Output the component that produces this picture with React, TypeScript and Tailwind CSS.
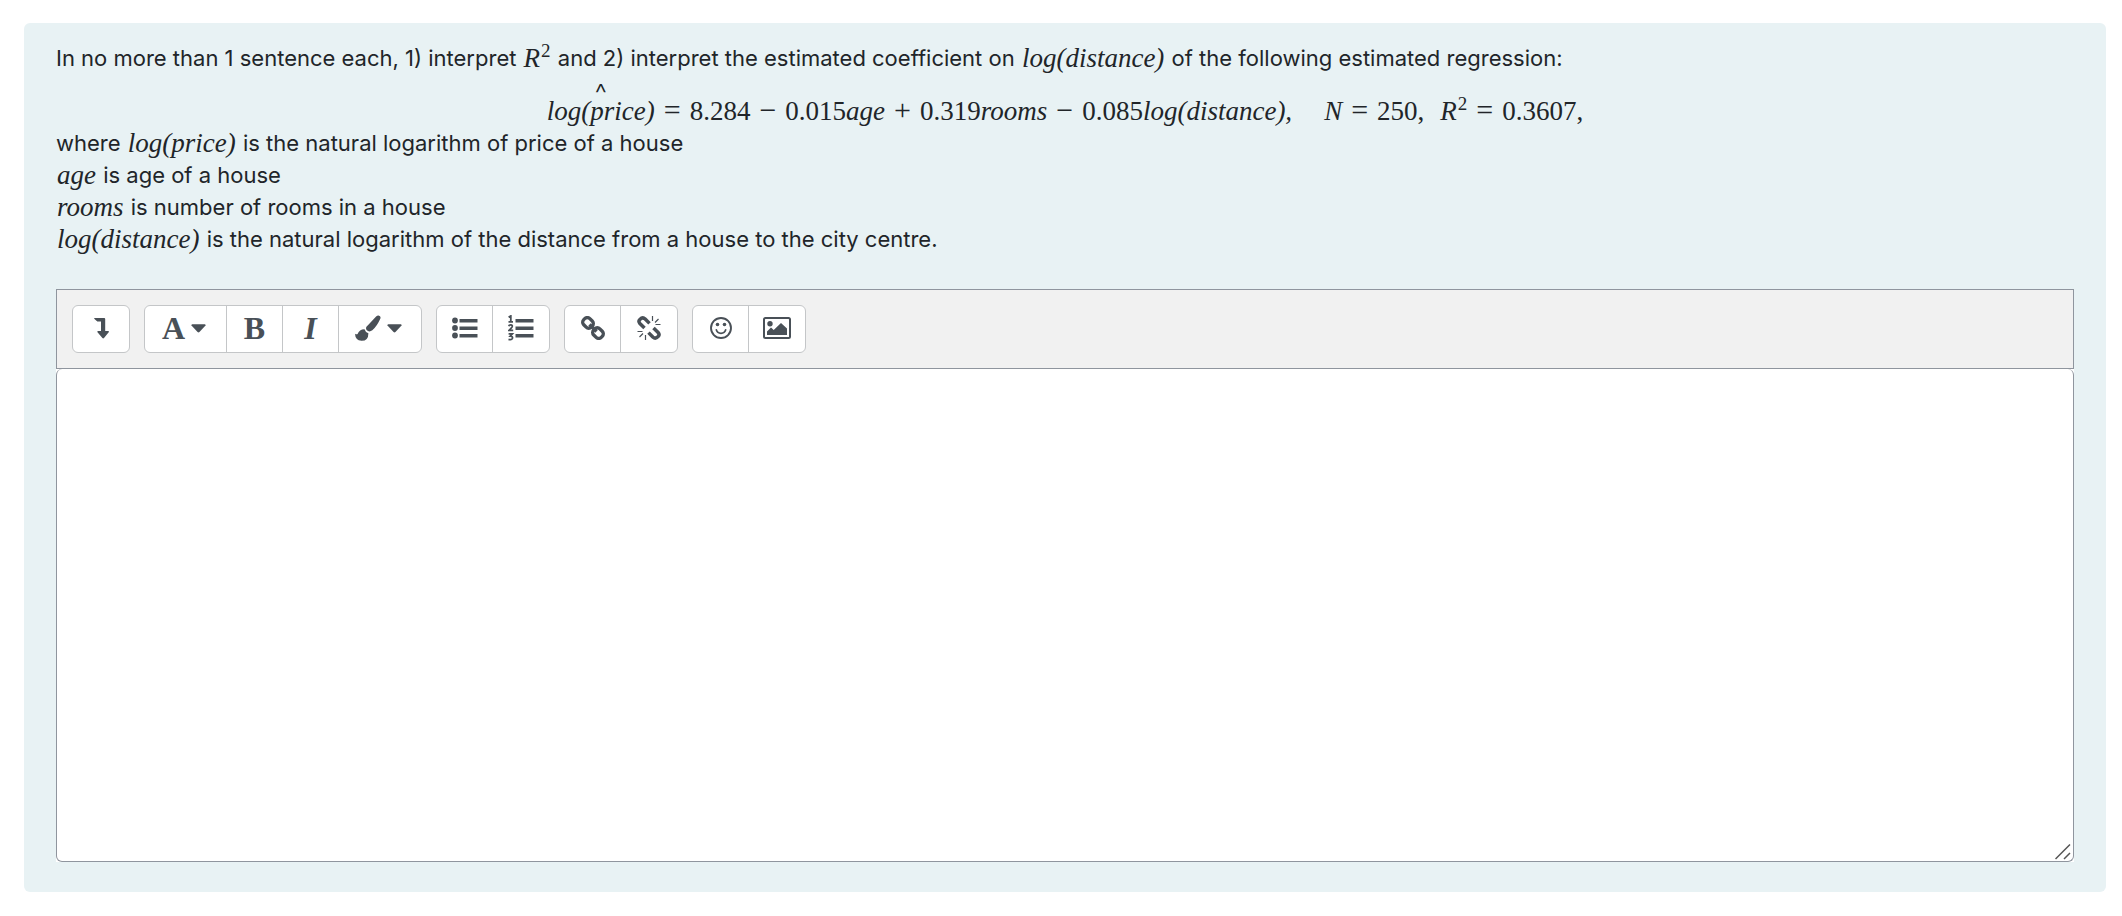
import type { ReactNode } from "react";

function Eq({ children }: { children: ReactNode }) {
  return (
    <span className="relative top-px mx-px font-['Liberation_Serif',serif] text-[27px] leading-none italic">{children}</span>
  );
}

function Num({ children }: { children: ReactNode }) {
  return <span className="not-italic">{children}</span>;
}

function Op({ children }: { children: ReactNode }) {
  return <span className="mx-[9px] text-[30px] leading-none not-italic">{children}</span>;
}

const Sup = () => <sup className="-top-[10px] ml-px text-[19px] leading-none not-italic">2</sup>;

const icon = "fill-[#495057]";

function Caret() {
  return (
    <svg width="15" height="9" viewBox="0 0 16 9" className={icon} aria-hidden="true">
      <path d="M1.3 0h13.4q1.2.2.8 1.3L9 8.2q-1 1-2 0L.5 1.3Q.1.2 1.3 0z" />
    </svg>
  );
}

const groups: { label: string; w: string; body: ReactNode }[][] = [
  [
    {
      label: "Show more buttons",
      w: "w-14",
      body: (
        <svg width="15" height="22" viewBox="0 0 15 22" className={icon}>
          <path d="M.6 1h9.6q1 0 1 1v12h3q1.2.3.5 1.3L10 21q-.8.8-1.6 0L3.500 15.300Q3 14.300 4 14h3V4.500H3.300L.2 1.800Q0 1.200.6 1z" />
        </svg>
      ),
    },
  ],
  [
    { label: "Paragraph styles", w: "w-[82px] pr-[3px]", body: <><b className="text-[32px]">A</b><Caret /></> },
    { label: "Bold", w: "w-14", body: <b className="text-[32px]">B</b> },
    { label: "Italic", w: "w-14", body: <i className="text-[32px] font-bold">I</i> },
    {
      label: "Font colour",
      w: "w-[82px] pr-[3px]",
      body: (
        <>
          <svg width="26" height="26" viewBox="0 0 26 26" className={icon}>
            <path d="M23.500.4q2.800.6 1.800 3.400-3.300 7.500-8 11.500-2.300 1.800-4.300.8-2.700-1.500-1.700-4 .4-.9 1.600-1.900l8.200-8.600Q22.200.3 23.500.4zM9.500 14.300q.8 2.900 3.900 3.900 0 7.800-7 7.600Q.3 25.200 0 18.700q1.500 1 2.600.3 1.800-4.800 6.900-4.700z" />
          </svg>
          <Caret />
        </>
      ),
    },
  ],
  [
    {
      label: "Unordered list",
      w: "w-14",
      body: (
        <svg width="26" height="22" viewBox="0 0 26 22" className={icon}>
          <circle cx="3" cy="3.500" r="2.900" />
          <circle cx="3" cy="11" r="2.900" />
          <circle cx="3" cy="18.500" r="2.900" />
          <path d="M7.500 2h18v3.600h-18zM7.500 9.400h18V13h-18zM7.500 16.900h18v3.600h-18z" />
        </svg>
      ),
    },
    {
      label: "Ordered list",
      w: "w-14",
      body: (
        <svg width="26" height="26" viewBox="0 0 26 26" className={icon}>
          <path d="M7.500 4h18v3.600h-18zM7.500 11.400h18V15h-18zM7.500 18.900h18v3.600h-18z" />
          <g fill="none" stroke="#495057" strokeWidth="1.800">
            <path d="M.6 2.200 2.800.9v5.700M.5 6.900H5M.8 11.200q.5-1.500 2-1.400 2 .3 1.300 2-.5 1-3 3.500h4.100M.6 18.900h3.700l-2 2.200q2.400 0 2.200 2-.5 2.200-4 1.200" />
          </g>
        </svg>
      ),
    },
  ],
  [
    {
      label: "Link",
      w: "w-14",
      body: (
        <svg width="24" height="24" viewBox="0 0 24 24" fill="none" stroke="#495057" strokeWidth="3.400">
          <rect x="1.700" y="2.600" width="10.600" height="8.600" rx="3.600" transform="rotate(45 7 6.900)" />
          <rect x="11.700" y="12.800" width="10.600" height="8.600" rx="3.600" transform="rotate(45 17 17.100)" />
          <path d="m8.500 8.500 7 7" />
        </svg>
      ),
    },
    {
      label: "Unlink",
      w: "w-14",
      body: (
        <svg width="24" height="24" viewBox="0 0 24 24" fill="none" stroke="#495057">
          <path strokeWidth="3.500" d="M7.500 12 2.900 7.500Q1 5.300 2.900 3.400 5.600.6 8.200 3l4.300 4.400M16.500 12l4.600 4.500q1.900 2.200 0 4.100-2.700 2.800-5.300.4l-4.300-4.400" />
          <path strokeWidth="1.200" d="M15.500 0v5M18 6.500 21.500 3M18.500 8.500h5M8.500 24v-5M6 17.500 2.500 21M5.500 15.500h-5" />
        </svg>
      ),
    },
  ],
  [
    {
      label: "Emoji picker",
      w: "w-14",
      body: (
        <svg width="22" height="22" viewBox="0 0 22 22" className={icon}>
          <circle cx="11" cy="11" r="10" fill="none" stroke="#495057" strokeWidth="1.900" />
          <circle cx="7.500" cy="7.500" r="1.800" />
          <circle cx="14.500" cy="7.500" r="1.800" />
          <path d="M6.300 12.800Q7.300 16.300 11 16.300t4.700-3.500" fill="none" stroke="#495057" strokeWidth="1.700" strokeLinecap="round" />
        </svg>
      ),
    },
    {
      label: "Insert or edit image",
      w: "w-14",
      body: (
        <svg width="28" height="22" viewBox="0 0 28 22" className={icon}>
          <rect x="1" y="1" width="26" height="20" rx="1.500" fill="none" stroke="#495057" strokeWidth="2" />
          <circle cx="7" cy="6.800" r="2.700" />
          <path d="M4 18v-3.500l4-4 2.700 2.500L18 6l6 5.500V18z" />
        </svg>
      ),
    },
  ],
];

export default function App() {
  return (
    <main className="px-4 pt-[23px] pb-6 pl-6 font-[Inter,sans-serif] text-[#212529]">
      <section className="rounded-md bg-[#e8f2f4] px-8 pt-[19px] pb-[30px]">
        <div className="text-[22px] leading-8">
          <p className="h-8">
            In no more than 1 sentence each, 1) interpret <Eq>R<Sup /></Eq> and 2) interpret the estimated coefficient on{" "}
            <Eq>log(distance)</Eq> of the following estimated regression:
          </p>
          <p className="mt-5 h-8 text-center">
            <Eq>
              <span className="relative">
                log(price)
                {/* accent sits over the whole term */}
                <span className="absolute inset-x-0 bottom-full -mb-1 text-center font-[Inter,sans-serif] text-[27px] leading-3 font-light not-italic">^</span>
              </span>
              <Op>=</Op><Num>8.284</Num><Op>−</Op><Num>0.015</Num>age<Op>+</Op><Num>0.319</Num>rooms<Op>−</Op><Num>0.085</Num>log(distance),
              <span className="ml-8">N</span><Op>=</Op><Num>250,</Num>
              <span className="ml-4">R<Sup /></span><Op>=</Op><Num>0.3607,</Num>
            </Eq>
          </p>
          <p className="mt-px h-8">where <Eq>log(price)</Eq> is the natural logarithm of price of a house</p>
          <p className="h-8"><Eq>age</Eq> is age of a house</p>
          <p className="h-8"><Eq>rooms</Eq> is number of rooms in a house</p>
          <p className="h-8"><Eq>log(distance)</Eq> is the natural logarithm of the distance from a house to the city centre.</p>
        </div>

        <div className="mt-[34px] flex flex-wrap gap-[14px] border border-[#8f959e] bg-[#f1f1f1] p-[15px]" role="toolbar" aria-label="Editor">
          {groups.map((group) => (
            <div key={group[0].label} className="flex h-12 divide-x divide-[#c4c6c8] overflow-hidden rounded-md border border-[#c4c6c8] bg-white">
              {group.map((b) => (
                <button key={b.label} type="button" aria-label={b.label} title={b.label} className={`${b.w} flex items-center justify-center gap-[6px] pb-0.5 font-['Liberation_Serif',serif] leading-none text-[#495057]`}>
                  {b.body}
                </button>
              ))}
            </div>
          ))}
        </div>
        <div className="relative bg-white">
          <textarea aria-label="Answer text" className="block h-[493px] w-full resize-none rounded-md border border-t-0 border-[#8f959e] bg-white p-3 text-[22px] outline-none" />
          <svg width="16" height="16" viewBox="0 0 16 16" className="absolute right-[3px] bottom-[2px]" fill="none" stroke="#555" strokeWidth="1.500">
            <path d="M.5 15 15 .5M9 15l6-6" />
          </svg>
        </div>
      </section>
    </main>
  );
}
